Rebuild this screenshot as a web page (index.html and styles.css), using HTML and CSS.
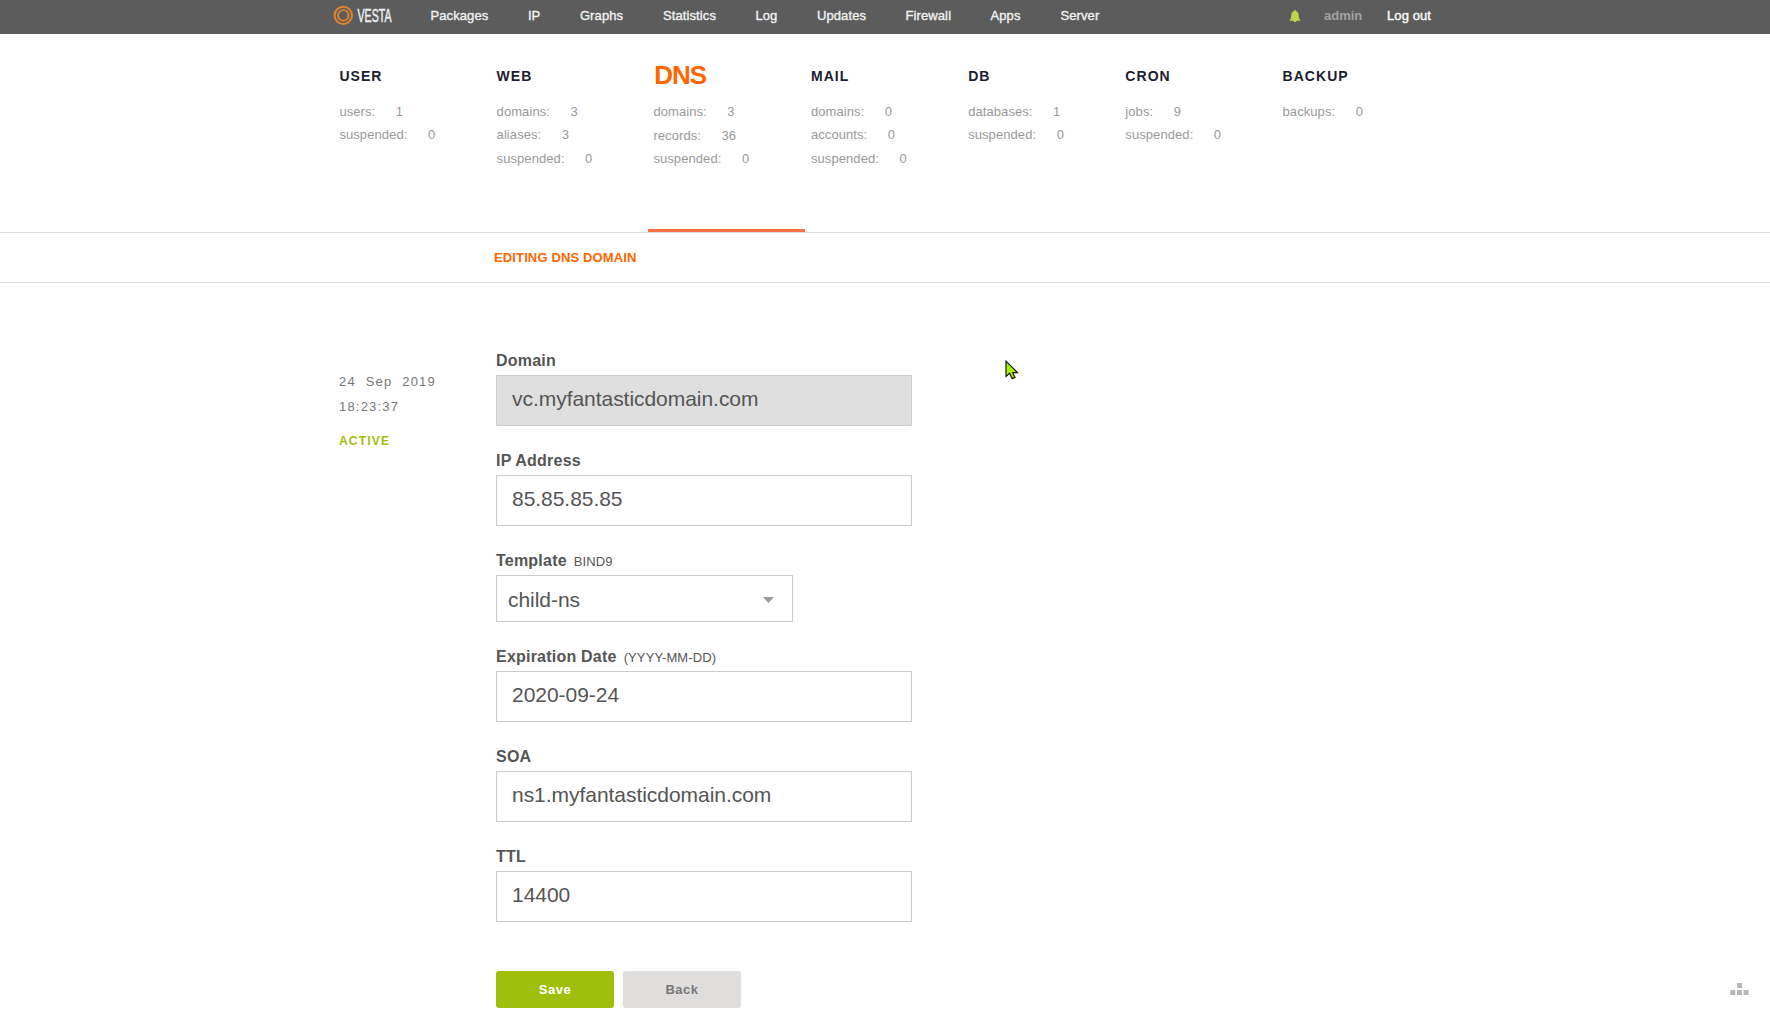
FILE: index.html
```html
<!DOCTYPE html>
<html lang="en">
<head>
<meta charset="utf-8">
<title>Vesta - DNS</title>
<link rel="stylesheet" href="styles.css">
</head>
<body>
<header class="topbar">
  <svg class="logo" width="70" height="31" viewBox="0 0 70 31">
    <circle cx="10.3" cy="15.4" r="8.7" fill="none" stroke="#e08330" stroke-width="2"/>
    <circle cx="10.3" cy="15.4" r="5.3" fill="none" stroke="#e08330" stroke-width="1.900"/>
    <text class="logo-text" x="24.500" y="21.600" textLength="34" lengthAdjust="spacingAndGlyphs">VESTA</text>
  </svg>
  <nav class="menu">
    <a>Packages</a><a>IP</a><a>Graphs</a><a>Statistics</a><a>Log</a><a>Updates</a><a>Firewall</a><a>Apps</a><a>Server</a>
  </nav>
  <div class="account">
    <svg class="bell" width="12" height="13" viewBox="0 0 12 13"><path d="M6 0.3C6.8 .3 7.2 .8 7.3 1.3C9 2 9.6 3.4 9.7 5.2C9.8 7.8 10.2 9 11.3 10.2V10.8H.7V10.2C1.8 9 2.2 7.8 2.3 5.2C2.4 3.4 3 2 4.700 1.3C4.800 .8 5.200 .3 6 .3ZM4.400 10.800H7.600C7.400 12.500 4.600 12.500 4.400 10.800Z" fill="#bcd64c"/></svg>
    <a class="user">admin</a>
    <a class="logout">Log out</a>
  </div>
</header>

<section class="stats">
  <div class="stat"><h2>USER</h2><p>users:<span>1</span></p><p>suspended:<span>0</span></p></div>
  <div class="stat"><h2>WEB</h2><p>domains:<span>3</span></p><p>aliases:<span>3</span></p><p>suspended:<span>0</span></p></div>
  <div class="stat active"><h2>DNS</h2><p>domains:<span>3</span></p><p>records:<span>36</span></p><p>suspended:<span>0</span></p></div>
  <div class="stat"><h2>MAIL</h2><p>domains:<span>0</span></p><p>accounts:<span>0</span></p><p>suspended:<span>0</span></p></div>
  <div class="stat"><h2>DB</h2><p>databases:<span>1</span></p><p>suspended:<span>0</span></p></div>
  <div class="stat"><h2>CRON</h2><p>jobs:<span>9</span></p><p>suspended:<span>0</span></p></div>
  <div class="stat"><h2>BACKUP</h2><p>backups:<span>0</span></p></div>
</section>

<div class="subbar">EDITING DNS DOMAIN</div>

<main class="content">
  <aside class="meta">
    <p class="date">24 Sep 2019</p>
    <p>18:23:37</p>
    <p class="status">ACTIVE</p>
  </aside>
  <form class="form">
    <label>Domain</label>
    <div class="field disabled">vc.myfantasticdomain.com</div>
    <label>IP Address</label>
    <div class="field">85.85.85.85</div>
    <label>Template<small>BIND9</small></label>
    <div class="field select">child-ns<svg width="11" height="6" viewBox="0 0 11 6"><path d="M0 0H11L5.500 6Z" fill="#999"/></svg></div>
    <label>Expiration Date<small>(YYYY-MM-DD)</small></label>
    <div class="field">2020-09-24</div>
    <label>SOA</label>
    <div class="field">ns1.myfantasticdomain.com</div>
    <label>TTL</label>
    <div class="field">14400</div>
    <div class="actions">
      <button type="button" class="save">Save</button>
      <button type="button" class="back">Back</button>
    </div>
  </form>
</main>

<svg class="shortcuts" width="19" height="13" viewBox="0 0 19 13" fill="#b7b7b7"><path d="M7 0h5v5h-5zM.3 7h5v5h-5zM7 7h5v5h-5zM13.500 7h5v5h-5z"/></svg>
<svg class="cursor" width="15" height="22" viewBox="0 0 15 22"><path d="M1 1.200V16.500L4.600 13.200L7.200 18.600L10 17.400L7.700 12.600H12.400Z" fill="#a6f500" stroke="#1a1a1a" stroke-width="1.200"/></svg>
</body>
</html>
```
FILE: styles.css
```css
* { box-sizing: border-box; }
body {
  margin: 0;
  height: 1023px;
  overflow: hidden;
  background: #fff;
  font: 13px "Liberation Sans", Arial, sans-serif;
}
h2, p { margin: 0; }

.topbar {
  display: flex;
  height: 34px;
  padding-left: 333px;
  background: #5c5c5c;
  line-height: 31px;
  color: #f2f2f2;
}
.logo { display: block; overflow: visible; }
.logo-text { font-size: 17.500px; fill: #eee; stroke: #eee; stroke-width: 0.500px; }
.menu {
  display: grid;
  grid-template-columns: 97.500px 52px 83px 92.500px 61.500px 88.500px 85px 70px 60px;
  margin-left: 27.400px;
  letter-spacing: 0.120px;
  -webkit-text-stroke: 0.350px #f2f2f2;
}
.account { display: flex; margin-left: 168.600px; }
.bell { margin: 10px 23px 0 0; }
.user { width: 63px; color: #a3a3a3; font-weight: bold; }
.logout { color: #fff; letter-spacing: 0.100px; -webkit-text-stroke: 0.350px #fff; }

.stats {
  display: grid;
  grid-template-columns: repeat(7, 157.200px);
  height: 199px;
  padding-left: 334px;
  border-bottom: 1px solid #ddd;
}
.stat {
  padding-left: 5.400px;
  line-height: 23.500px;
  letter-spacing: 0.080px;
  color: #999;
}
.stat.active { width: 157px; margin-left: -0.400px; border-bottom: 3px solid #ff7043; }
.stat h2 {
  height: 65.600px;
  padding-top: 29px;
  font-size: 14px;
  line-height: 26px;
  letter-spacing: 1.050px;
  color: #1c1c2e;
}
.stat.active h2 {
  height: 66px;
  padding: 28px 0 0 0.800px;
  font-size: 26px;
  letter-spacing: -1px;
  color: #ff6600;
}
.stat span { margin-left: 20.500px; }

.subbar {
  height: 50px;
  padding-left: 494px;
  border-bottom: 1px solid #ddd;
  line-height: 49px;
  font-weight: bold;
  letter-spacing: 0.130px;
  color: #ff6600;
}

.content { display: flex; padding: 66px 0 0 339px; }
.meta {
  width: 157px;
  padding-top: 20px;
  line-height: 25px;
  letter-spacing: 1.200px;
  color: #777;
}
.date { word-spacing: 5px; }
.status {
  margin-top: 10px;
  font-size: 12px;
  font-weight: bold;
  color: #a0be0c;
}

.form { width: 416px; }
.form label {
  display: block;
  height: 26px;
  line-height: 23px;
  font-size: 16px;
  font-weight: bold;
  letter-spacing: 0.220px;
  color: #555;
}
.form small {
  margin-left: 7px;
  font-size: 13px;
  font-weight: normal;
  letter-spacing: 0.100px;
}
.field {
  height: 51px;
  margin-bottom: 23px;
  padding-left: 15px;
  border: 1px solid #ccc;
  line-height: 46px;
  font-size: 21px;
  letter-spacing: -0.040px;
  color: #555;
}
.field.disabled { background: #dfdfdf; }
.field.select {
  display: flex;
  justify-content: space-between;
  align-items: center;
  width: 297px;
  height: 47px;
  padding: 2px 18px 0 11px;
}
.actions { display: flex; gap: 9px; padding-top: 26px; }
.actions button {
  width: 118px;
  height: 37px;
  padding: 0 0 1px;
  border: 0;
  border-radius: 3px;
  font: bold 13px "Liberation Sans", Arial, sans-serif;
  letter-spacing: 0.500px;
}
.save { background: #a0be0c; color: #fff; }
.back { background: #dfdedd; color: #777; }

.shortcuts { position: absolute; left: 1729.500px; top: 983px; }
.cursor { position: absolute; left: 1005px; top: 360px; }
```
